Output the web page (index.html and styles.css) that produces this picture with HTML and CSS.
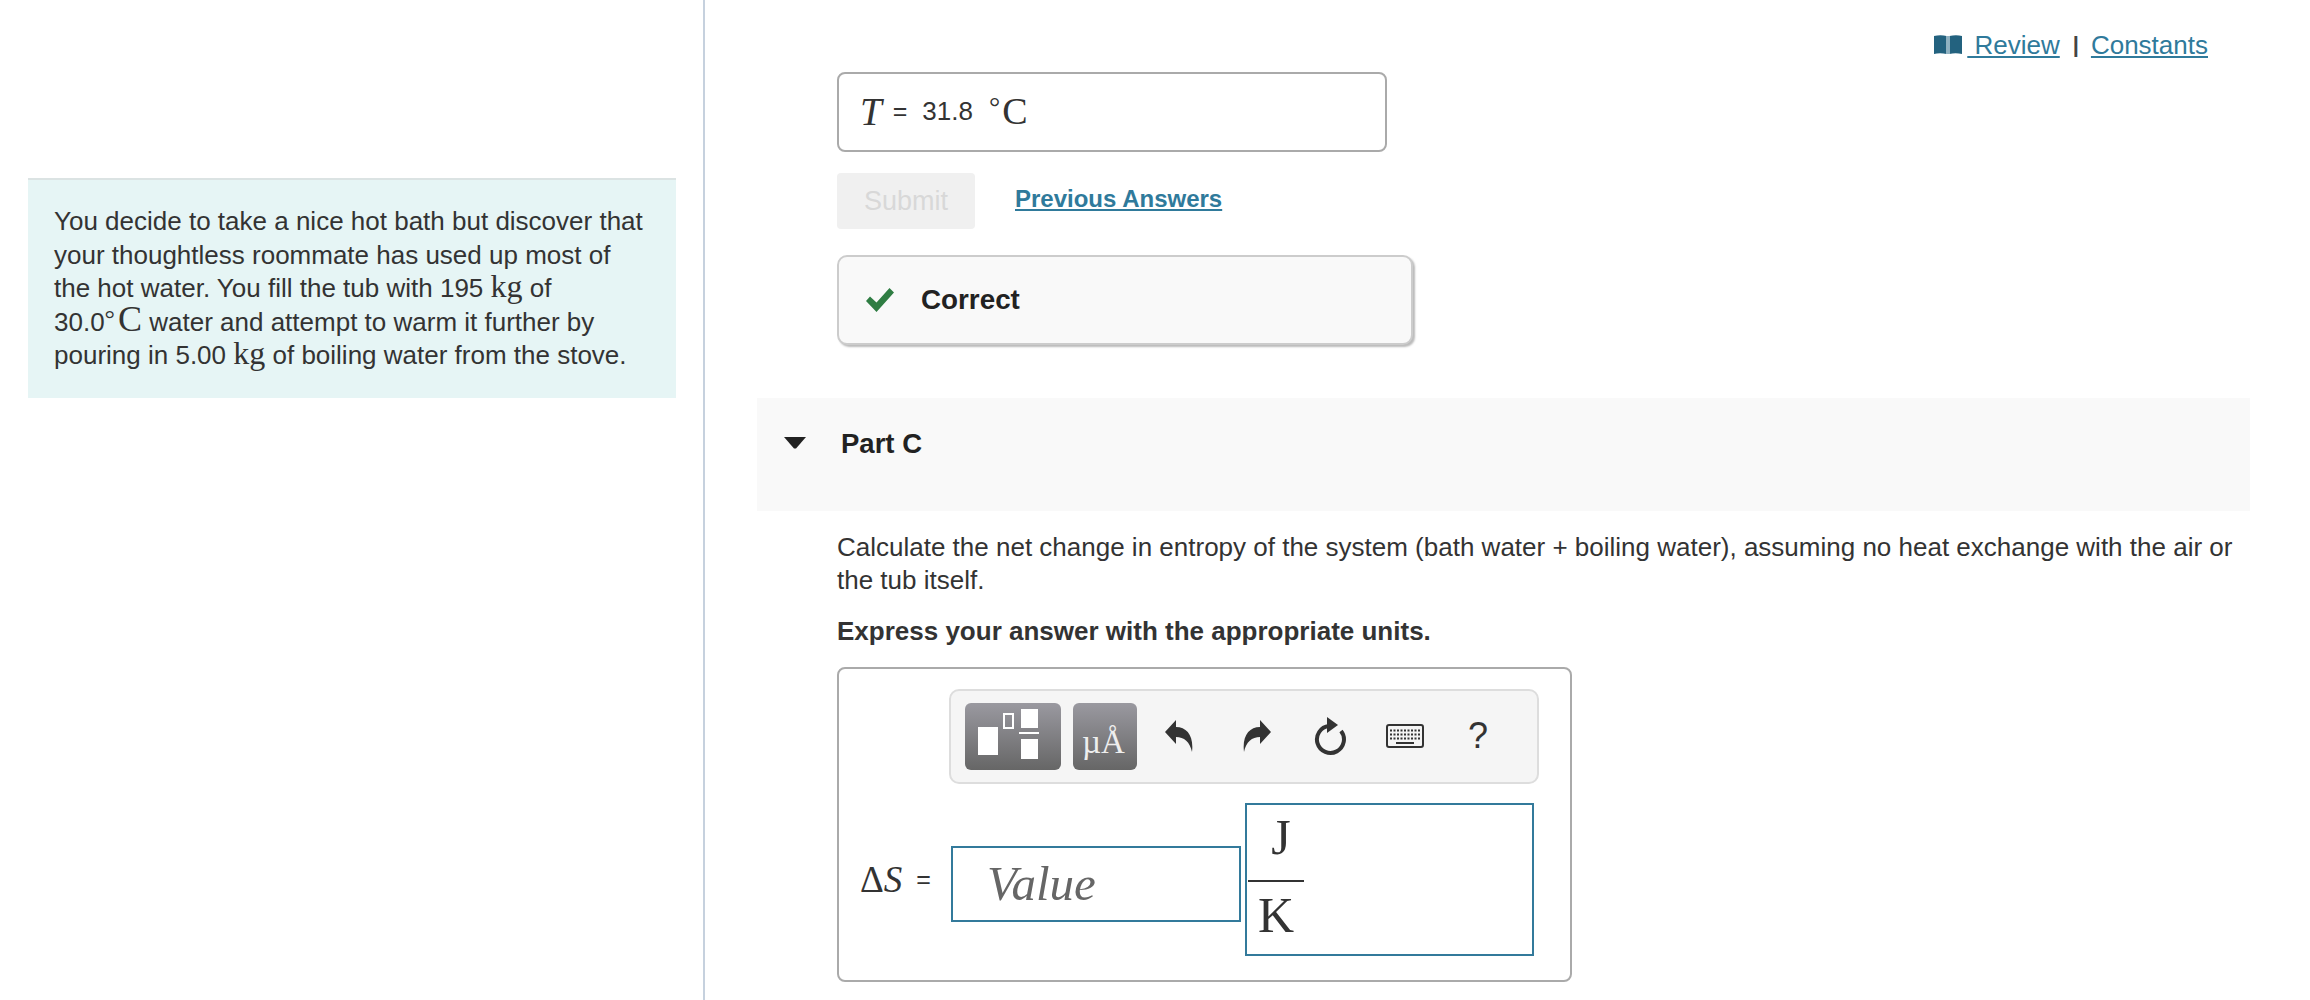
FILE: index.html
```html
<!DOCTYPE html>
<html lang="en">
<head>
    <meta charset="UTF-8">
    <title>Part C</title>
    <link rel="stylesheet" href="styles.css">
</head>
<body>
    <aside class="side">
        <div class="intro">
            You decide to take a nice hot bath but discover that your thoughtless roommate has used up most of the hot water. You fill the tub with 195 <span class="math">kg</span> of<br>30.0<span class="math deg">°</span><span class="math celsius">C</span> water and attempt to warm it further by pouring in 5.00 <span class="math">kg</span> of boiling water from the stove.
        </div>
    </aside>

    <main class="main">
        <div class="top-links">
            <svg class="book" viewBox="0 0 28 20" width="28" height="20">
                <path d="M0 1c4-1 9-1 12.500 0v18c-4-1-9-1-12.500 0z" fill="#23627f"/>
                <path d="M15.500 1c4-1 9-1 12.500 0v18c-4-1-9-1-12.500 0z" fill="#23627f"/>
                <path d="M12.500 1h3v18h-3z" fill="#8fb2c2"/>
            </svg>
            <a href="#" class="link review">&nbsp;Review</a>
            <span class="sep">|</span>
            <a href="#" class="link">Constants</a>
        </div>

        <div class="indent">
            <div class="result-box">
                <span class="math var">T</span>
                <span class="eq">=</span>
                <span>31.8</span>
                <span class="math unit-deg">°</span>
                <span class="math unit">C</span>
            </div>

            <div class="actions">
                <button class="submit">Submit</button>
                <a href="#" class="link prev">Previous Answers</a>
            </div>

            <div class="feedback">
                <svg class="check" viewBox="0 0 28 24" width="28" height="24">
                    <path d="M0 13l4-4.500 6.500 6L23.500 0 28 4.500 10.500 24z" fill="#2f7d43"/>
                </svg>
                <span>Correct</span>
            </div>
        </div>

        <section class="part-head">
            <svg class="caret" viewBox="0 0 22 12" width="22" height="12">
                <path d="M0 0h22L12 11.500h-2z" fill="#222"/>
            </svg>
            <h2>Part C</h2>
        </section>

        <div class="indent part-body">
            <p class="question">Calculate the net change in entropy of the system (bath water + boiling water), assuming no heat exchange with the air or the tub itself.</p>
            <p class="hint">Express your answer with the appropriate units.</p>

            <div class="answer-box">
                <div class="toolbar">
                    <div class="tool-btn tool-wide">
                        <svg viewBox="0 0 96 67" width="96" height="67">
                            <path d="M13 24h20v28H13zM56 6h17v19H56zM54 29h20v2H54zM56 36h17v20H56z" fill="#fff"/>
                            <path d="M39 11h9v14h-9z" fill="none" stroke="#fff" stroke-width="2"/>
                        </svg>
                    </div>
                    <div class="tool-btn tool-units">µÅ</div>
                    <svg class="tool-icon undo" viewBox="0 0 28 32" width="28" height="32">
                        <path d="M0 12L11 0v7c11 0 18 9 16 25-2-10-8-15-16-15v7z" fill="#333"/>
                    </svg>
                    <svg class="tool-icon redo" viewBox="0 0 28 32" width="28" height="32">
                        <path d="M28 12L17 0v7C6 7-1 16 1 32c2-10 8-15 16-15v7z" fill="#333"/>
                    </svg>
                    <svg class="tool-icon reload" viewBox="0 0 36 38" width="36" height="38">
                        <path d="M17 9A13.500 13.500 0 1 0 29 14" fill="none" stroke="#333" stroke-width="4"/>
                        <path d="M15 0l11 8-11 8z" fill="#333"/>
                    </svg>
                    <svg class="tool-icon keyboard" viewBox="0 0 38 24" width="38" height="24">
                        <rect x="1" y="1" width="36" height="22" rx="2" fill="#f5f5f5" stroke="#333" stroke-width="2"/>
                        <path d="M4 6.500h30M4 10.500h30M4 14.500h30" stroke="#333" stroke-width="2" stroke-dasharray="2 1.500"/>
                        <path d="M10 19h18" stroke="#333" stroke-width="2"/>
                    </svg>
                    <span class="help">?</span>
                </div>

                <div class="answer-row">
                    <div class="answer-label">
                        <span class="math">Δ<i>S</i></span>
                        <span class="eq">=</span>
                    </div>
                    <div class="value-input">Value</div>
                    <div class="units-input">
                        <div class="fraction">
                            <span class="num">J</span>
                            <span class="den">K</span>
                        </div>
                    </div>
                </div>
            </div>
        </div>
    </main>
</body>
</html>
```

FILE: styles.css
```css
/* page */
html, body {
    margin: 0;
    height: 100%;
    overflow: hidden;
}

body {
    display: flex;
    font-family: "Liberation Sans", Arial, sans-serif;
    font-size: 26px;
    line-height: 32.5px;
    color: #333;
    background: #fff;
}

.math {
    font-family: "Liberation Serif", "Times New Roman", serif;
    font-size: 32px;
    line-height: 0;
}

.celsius {
    font-size: 36px;
}

.deg {
    margin-right: 3px;
    font-size: 26px;
    vertical-align: 4px;
}

.link {
    color: #2f7a9b;
    text-decoration: underline;
}

/* left column */
.side {
    flex: none;
    box-sizing: border-box;
    width: 705px;
    height: 1000px;
    padding: 178px 27px 0 28px;
    border-right: 2px solid #c6d1de;
}

.intro {
    padding: 25px 26px 25.500px;
    line-height: 33.500px;
    background: #e6f5f5;
    border-top: 2px solid #dbe3e3;
}

/* right column */
.main {
    flex: 1;
    min-width: 0;
    padding-right: 60px;
}

.top-links {
    display: flex;
    justify-content: flex-end;
    align-items: center;
    height: 72px;
    padding: 18px 42px 0 0;
    box-sizing: border-box;
}

.book {
    margin-right: 5px;
}

.sep {
    margin: 0 12px 0 13px;
    font-size: 22px;
    font-weight: bold;
    color: #444;
}

.indent {
    margin-left: 132px;
}

.result-box {
    display: flex;
    align-items: center;
    box-sizing: border-box;
    width: 550px;
    height: 80px;
    padding: 0 0 2px 21px;
    border: 2px solid #aaa;
    border-radius: 8px;
}

.result-box .math {
    line-height: 1;
}

.var {
    font-style: italic;
    font-size: 39px;
}

.eq {
    margin: 0 15px 0 11px;
    font-size: 25px;
}

.unit-deg {
    margin: -8px 2px 0 16px;
    font-size: 28px;
}

.unit {
    font-size: 38px;
}

.actions {
    display: flex;
    align-items: center;
    margin-top: 21px;
}

.submit {
    width: 138px;
    height: 56px;
    padding: 0;
    border: 0;
    border-radius: 4px;
    background: #f0f0f0;
    color: #d8d8d8;
    font: 27px "Liberation Sans", Arial, sans-serif;
}

.prev {
    margin-left: 40px;
    margin-top: -3px;
    font-size: 24px;
    font-weight: bold;
}

.feedback {
    display: flex;
    align-items: center;
    box-sizing: border-box;
    width: 576px;
    height: 90px;
    margin-top: 26px;
    padding: 0 0 0 27px;
    background: #f9f9f9;
    border: 2px solid #ccc;
    border-radius: 10px;
    box-shadow: 2px 2px 2px #bbb;
    font-size: 27.800px;
    font-weight: bold;
    color: #222;
}

.check {
    margin-right: 27px;
}

.part-head {
    display: flex;
    align-items: flex-start;
    box-sizing: border-box;
    height: 113px;
    margin: 53px 0 0 52px;
    padding: 29px 0 0 27px;
    background: #f9f9f9;
}

.part-head h2 {
    margin: 0;
    font-size: 27.500px;
    line-height: 34px;
    color: #222;
}

.caret {
    margin: 10px 35px 0 0;
}

.question {
    margin: 20px 0 0;
}

.hint {
    margin: 19px 0 0;
    font-weight: bold;
}

/* answer box */
.answer-box {
    box-sizing: border-box;
    width: 735px;
    height: 315px;
    margin-top: 19px;
    padding: 20px 0 0 21px;
    border: 2px solid #aaa;
    border-radius: 8px;
}

.toolbar {
    display: flex;
    align-items: center;
    box-sizing: border-box;
    width: 590px;
    height: 95px;
    margin-left: 89px;
    padding-left: 14px;
    background: #f5f5f5;
    border: 2px solid #ddd;
    border-radius: 10px;
}

.tool-btn {
    height: 67px;
    border-radius: 6px;
    background: linear-gradient(#9a99a0, #666);
}

.tool-wide {
    width: 96px;
}

.tool-units {
    box-sizing: border-box;
    width: 64px;
    margin-left: 12px;
    padding-right: 3px;
    color: #eee;
    font-family: "Liberation Serif", serif;
    font-size: 33px;
    line-height: 78px;
    text-align: center;
}

.undo {
    margin-left: 28px;
}

.redo {
    margin-left: 50px;
}

.reload {
    margin-left: 41px;
}

.keyboard {
    margin-left: 38px;
}

.help {
    margin-left: 44px;
    font-size: 36px;
}

.answer-row {
    display: flex;
    align-items: flex-start;
    margin-top: 19px;
}

.answer-label {
    display: flex;
    align-items: center;
    width: 91px;
    height: 76px;
    padding-bottom: 8px;
    box-sizing: border-box;
}

.answer-label .math {
    font-size: 37px;
    line-height: 1;
}

.answer-label .eq {
    margin: 0 0 0 14px;
}

.value-input {
    box-sizing: border-box;
    width: 290px;
    height: 76px;
    margin-top: 43px;
    padding-left: 34px;
    border: 2px solid #337a9b;
    color: #666;
    font: italic 49px/72px "Liberation Serif", serif;
}

.answer-row .answer-label {
    margin-top: 43px;
}

.units-input {
    box-sizing: border-box;
    width: 289px;
    height: 153px;
    margin-left: 4px;
    padding-left: 1px;
    border: 2px solid #337a9b;
    font: 50px/1 "Liberation Serif", serif;
}

.fraction {
    width: 56px;
    text-align: center;
}

.num, .den {
    display: block;
    height: 75px;
    line-height: 64px;
}

.num {
    padding-left: 10px;
    border-bottom: 2px solid #333;
    box-sizing: border-box;
    height: 77px;
}

.den {
    line-height: 67px;
}
```
